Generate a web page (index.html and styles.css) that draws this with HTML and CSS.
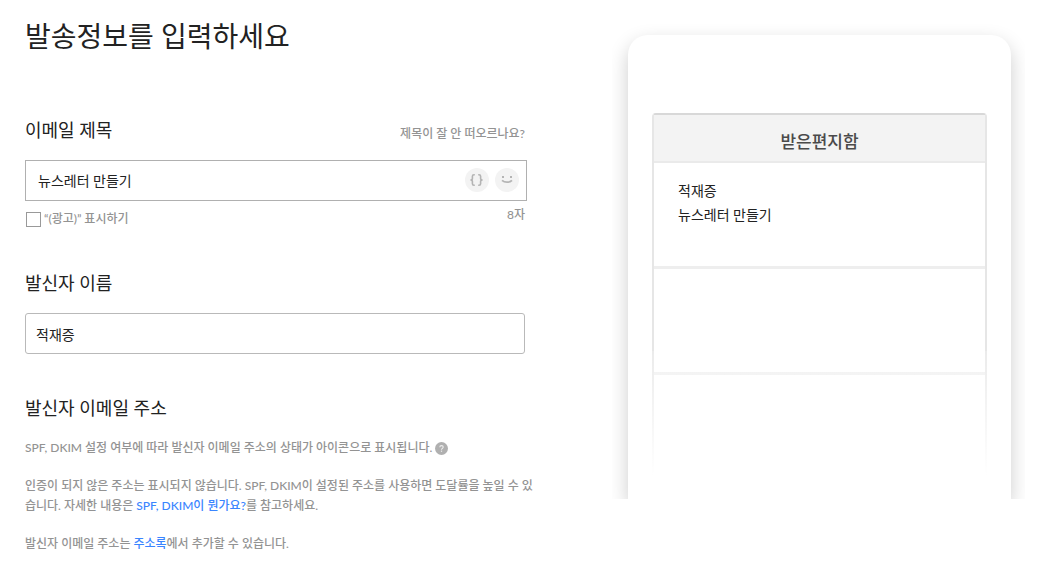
FILE: index.html
```html
<!DOCTYPE html>
<html lang="ko">
<head>
  <meta charset="UTF-8">
  <title>발송정보를 입력하세요</title>
  <meta name="viewport" content="width=device-width, initial-scale=1.0">
  <link rel="stylesheet" href="styles.css">
</head>
<body>
  <div class="container">
    <form class="send-form">
      <h1 class="title">발송정보를 입력하세요</h1>

      <div class="form-group">
        <div class="label-row">
          <label class="label" for="subject">이메일 제목</label>
          <a href="#" class="help-link">제목이 잘 안 떠오르나요?</a>
        </div>
        <div class="subject-box">
          <input type="text" id="subject" name="subject" value="뉴스레터 만들기">
          <button type="button" class="icon-button" aria-label="메일머지">
            <svg width="24" height="24" viewBox="0 0 24 24" fill="none" stroke="#b4b4b4" stroke-width="1.6">
              <path d="M9.8 6.8H9Q7.4 6.8 7.4 8.3V10.4Q7.4 12 5.4 12Q7.4 12 7.4 13.6V15.7Q7.4 17.2 9 17.2H9.8"/>
              <path d="M13.2 6.8H14Q15.6 6.8 15.6 8.3V10.4Q15.6 12 17.6 12Q15.6 12 15.6 13.6V15.7Q15.6 17.2 14 17.2H13.2"/>
            </svg>
          </button>
          <button type="button" class="icon-button" aria-label="이모지">
            <svg width="24" height="24" viewBox="0 0 24 24" fill="none">
              <rect x="7" y="8" width="2" height="2" fill="#b4b4b4"/>
              <rect x="15" y="8" width="2" height="2" fill="#b4b4b4"/>
              <path d="M7 12.3Q9 14.2 12 14.2T17 12.3" stroke="#b4b4b4" stroke-width="1.8"/>
            </svg>
          </button>
        </div>
        <div class="subject-foot">
          <label class="check"><input type="checkbox" name="ad"> “(광고)” 표시하기</label>
          <span class="count">8자</span>
        </div>
      </div>

      <div class="form-group">
        <div class="label-row">
          <label class="label" for="sender">발신자 이름</label>
        </div>
        <input type="text" id="sender" class="text-input" name="sender" value="적재증">
      </div>

      <div class="form-group">
        <div class="label-row">
          <h2 class="label">발신자 이메일 주소</h2>
        </div>
        <div class="desc">
          <p>SPF, DKIM 설정 여부에 따라 발신자 이메일 주소의 상태가 아이콘으로 표시됩니다.
            <svg class="question" width="13" height="13" viewBox="0 0 13 13" fill="none">
              <circle cx="6.5" cy="6.5" r="6.5" fill="#b0b0b0"/>
              <path d="M4.8 5.2Q4.8 3.6 6.5 3.6T8.2 5.1Q8.2 5.9 7.3 6.4Q6.5 6.8 6.5 7.7" stroke="#eee" stroke-width="1.1"/>
              <rect x="5.9" y="8.6" width="1.2" height="1.2" fill="#eee"/>
            </svg>
          </p>
          <p>인증이 되지 않은 주소는 표시되지 않습니다. SPF, DKIM이 설정된 주소를 사용하면 도달률을 높일 수 있습니다. 자세한 내용은 <a href="#">SPF, DKIM이 뭔가요?</a>를 참고하세요.</p>
          <p>발신자 이메일 주소는 <a href="#">주소록</a>에서 추가할 수 있습니다.</p>
        </div>
      </div>
    </form>

    <div class="preview">
      <div class="phone">
        <div class="inbox">
          <div class="inbox-title">받은편지함</div>
          <div class="mail">
            <div>적재증</div>
            <div>뉴스레터 만들기</div>
          </div>
          <div class="mail"></div>
          <div class="mail"></div>
        </div>
      </div>
    </div>
  </div>
</body>
</html>
```

FILE: styles.css
```css
* {
  box-sizing: border-box;
}

body {
  margin: 0;
  background: #fff;
  color: #222;
  font-family: Lato, "Noto Sans CJK KR", sans-serif;
  font-size: 14px;
}

h1, h2, p {
  margin: 0;
  font-weight: 400;
}

a {
  color: #3a85ff;
  text-decoration: none;
}

input, button {
  font: inherit;
  color: inherit;
}

.container {
  display: grid;
  grid-template-columns: minmax(0, 500fr) minmax(0, 413fr);
  column-gap: 87px;
  align-items: start;
  padding: 16px 24px 0 25px;
}

.title {
  font-size: 28px;
  line-height: 40px;
  margin-bottom: 61px;
}

.form-group {
  margin-bottom: 41px;
}

.form-group:last-child {
  margin-bottom: 0;
}

.label-row {
  display: flex;
  justify-content: space-between;
  align-items: flex-end;
  margin-bottom: 17px;
}

.label {
  font-size: 18px;
  line-height: 26px;
}

.help-link {
  color: #939393;
  font-size: 12px;
  font-weight: 500;
  line-height: 18px;
}

.subject-box {
  display: flex;
  align-items: center;
  gap: 6px;
  height: 41px;
  margin-right: -2px;
  padding: 0 7px 2px 12px;
  border: 1px solid #b0b0b0;
}

.subject-box input {
  flex: 1;
  min-width: 0;
  padding: 0;
  border: none;
  outline: none;
  background: none;
}

.icon-button {
  width: 24px;
  height: 24px;
  padding: 0;
  border: none;
  border-radius: 50%;
  background: #f3f3f3;
  cursor: pointer;
}

.icon-button svg {
  display: block;
}

.subject-foot {
  display: flex;
  justify-content: space-between;
  align-items: flex-start;
  margin-top: 8px;
  color: #939393;
  font-size: 12px;
  font-weight: 500;
}

.check {
  display: flex;
  align-items: center;
  gap: 3px;
  line-height: 20px;
}

.check input {
  appearance: none;
  width: 15px;
  height: 15px;
  margin: 0 0 0 1px;
  border: 1px solid #999;
}

.check input:checked {
  background: #2f80ff;
}

.count {
  line-height: 12px;
}

.text-input {
  display: block;
  width: 100%;
  height: 41px;
  padding: 0 10px;
  border: 1px solid #b9b9b9;
  border-radius: 3px;
  outline: none;
}

.desc {
  display: flex;
  flex-direction: column;
  gap: 18px;
  margin-right: -12px;
  color: #939393;
  font-size: 12px;
  line-height: 20px;
  word-break: break-all;
}

.desc p {
  font-weight: 500;
}

.question {
  vertical-align: -3px;
}

.preview {
  overflow: hidden;
  padding: 19px 14px 0 16px;
}

.phone {
  padding: 78px 24px 24px;
  border-radius: 20px 20px 0 0;
  box-shadow: 0 8px 20px rgba(0, 0, 0, 0.2);
}

.inbox {
  position: relative;
  height: 362px;
  border: 2px solid #e6e6e6;
  border-top-color: #d8d8d8;
  border-bottom: none;
  border-radius: 4px 4px 0 0;
}

/* fade out towards the bottom */
.inbox::after {
  content: "";
  position: absolute;
  inset: 236px -2px 0;
  background: linear-gradient(rgba(255, 255, 255, 0.2), #fff);
}

.inbox-title {
  padding: 14px 0 6px;
  border-bottom: 2px solid #eaeaea;
  background: #f3f3f3;
  color: #4a4a4a;
  font-size: 17px;
  font-weight: 500;
  line-height: 26px;
  text-align: center;
}

.mail {
  height: 106px;
  padding: 16px 24px;
  border-bottom: 3px solid #eee;
  line-height: 24px;
}

.mail:last-child {
  border-bottom: none;
}
```
